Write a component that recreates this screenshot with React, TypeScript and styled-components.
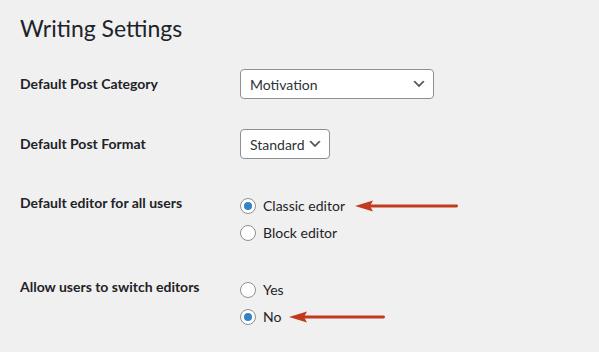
import React from 'react';
import styled, { createGlobalStyle } from 'styled-components';

const GlobalStyle = createGlobalStyle`
  html, body {
    margin: 0;
    padding: 0;
    background: #f0f0f1;
  }
  body {
    width: 599px;
    height: 352px;
    overflow: hidden;
    font-family: Lato, 'Noto Sans', sans-serif;
    color: #1d2327;
  }
`;

const Wrap = styled.div`
  padding: 0 20px;
`;

const Title = styled.h1`
  margin: 0;
  padding: 13px 0 11px;
  font-size: 23px;
  font-weight: 400;
  line-height: 30px;
  color: #1d2327;
`;

const Row = styled.div`
  display: flex;
  align-items: flex-start;
`;

const Label = styled.div<{ padTop: number }>`
  width: 220px;
  flex-shrink: 0;
  padding-top: ${({ padTop }) => padTop}px;
  font-size: 14px;
  font-weight: 700;
  line-height: 18px;
`;

const Field = styled.div`
  padding: 15px 0;
`;

const SelectBox = styled.div<{ width: number }>`
  box-sizing: border-box;
  display: flex;
  align-items: center;
  justify-content: space-between;
  width: ${({ width }) => width}px;
  height: 30px;
  padding: 0 6px 0 9px;
  background: #fff;
  border: 1px solid #8c8f94;
  border-radius: 4px;
  font-size: 14px;
  color: #2c3338;
`;

const Chevron = () => (
  <svg width="16" height="16" viewBox="0 0 20 20">
    <path d="M5 6l5 5 5-5 2 1-7 7-7-7 2-1z" fill="#555" />
  </svg>
);

const RadioItem = styled.label`
  position: relative;
  display: flex;
  align-items: center;
  gap: 7px;
  height: 27px;
  padding-top: 7px;
  box-sizing: border-box;
  font-size: 14px;
  line-height: 20px;
`;

const Radio = styled.span<{ checked: boolean }>`
  box-sizing: border-box;
  display: inline-flex;
  align-items: center;
  justify-content: center;
  width: 16px;
  height: 16px;
  border-radius: 50%;
  border: 1px solid #8c8f94;
  background: #fff;

  &::before {
    content: '';
    width: 8px;
    height: 8px;
    border-radius: 50%;
    background: ${({ checked }) => (checked ? '#3582c4' : 'transparent')};
  }
`;

const ArrowWrap = styled.span<{ left: number }>`
  position: absolute;
  left: ${({ left }) => left}px;
  top: 11px;
  line-height: 0;
`;

const Arrow = ({ length, left }: { length: number; left: number }) => (
  <ArrowWrap left={left}>
    <svg width={length} height="12" viewBox={`0 0 ${length} 12`}>
      <rect x="14" y="4.6" width={length - 15} height="2.8" rx="1.4" fill="#c23a1e" />
      <path d="M0 6 L18 0.5 L15 6 L18 11.5 Z" fill="#c23a1e" />
    </svg>
  </ArrowWrap>
);

const Option = ({
  label,
  checked,
  arrow,
}: {
  label: string;
  checked?: boolean;
  arrow?: { length: number; left: number };
}) => (
  <RadioItem>
    <Radio checked={!!checked} />
    {label}
    {arrow && <Arrow length={arrow.length} left={arrow.left} />}
  </RadioItem>
);

const App = () => (
  <Wrap>
    <GlobalStyle />
    <Title>Writing Settings</Title>
    <Row>
      <Label padTop={21}>Default Post Category</Label>
      <Field>
        <SelectBox width={194}>
          Motivation
          <Chevron />
        </SelectBox>
      </Field>
    </Row>
    <Row>
      <Label padTop={21}>Default Post Format</Label>
      <Field>
        <SelectBox width={90}>
          Standard
          <Chevron />
        </SelectBox>
      </Field>
    </Row>
    <Row>
      <Label padTop={20}>Default editor for all users</Label>
      <Field>
        <Option label="Classic editor" checked arrow={{ length: 104, left: 115 }} />
        <Option label="Block editor" />
      </Field>
    </Row>
    <Row>
      <Label padTop={20}>Allow users to switch editors</Label>
      <Field>
        <Option label="Yes" />
        <Option label="No" checked arrow={{ length: 97, left: 49 }} />
      </Field>
    </Row>
  </Wrap>
);

export default App;
